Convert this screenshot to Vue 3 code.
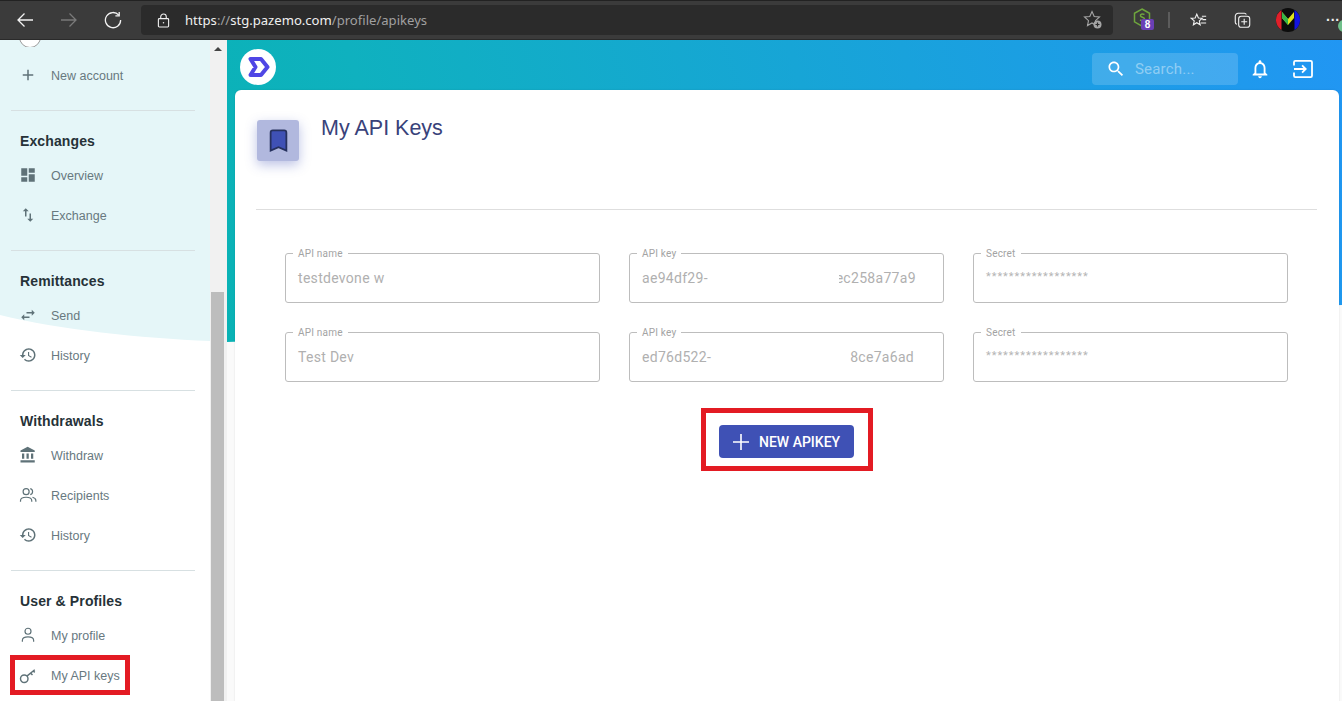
<script setup>
const sections = [
  { title: 'Exchanges', items: [['Overview', 'dash'], ['Exchange', 'vert']] },
  { title: 'Remittances', items: [['Send', 'horiz'], ['History', 'hist']] },
  { title: 'Withdrawals', items: [['Withdraw', 'bank'], ['Recipients', 'people'], ['History', 'hist']] },
]
const paths = {
  plus: 'M19 13h-6v6h-2v-6H5v-2h6V5h2v6h6v2z',
  dash: 'M3 13h8V3H3v10zm0 8h8v-6H3v6zm10 0h8V11h-8v10zm0-18v6h8V3h-8z',
  vert: 'M16 17.01V10h-2v7.01h-3L15 21l4-3.99h-3zM9 3L5 6.99h3V14h2V6.99h3L9 3z',
  horiz: 'M6.99 11L3 15l3.99 4v-3H14v-2H6.99v-3zM21 9l-3.99-4v3H10v2h7.01v3L21 9z',
  hist: 'M13 3c-4.97 0-9 4.03-9 9H1l3.89 3.89.07.14L9 12H6c0-3.87 3.13-7 7-7s7 3.13 7 7-3.13 7-7 7c-1.93 0-3.68-.79-4.94-2.06l-1.42 1.42C8.27 19.99 10.51 21 13 21c4.97 0 9-4.03 9-9s-4.03-9-9-9zm-1 5v5l4.28 2.54.72-1.21-3.5-2.08V8H12z',
  bank: 'M4 10v7h3v-7H4zm6 0v7h3v-7h-3zM2 22h19v-3H2v3zm14-12v7h3v-7h-3zm-4.5-9L2 6v2h19V6l-9.5-5z',
}
const rows = [
  [
    { label: 'API name', a: 'testdevone w' },
    { label: 'API key', a: 'ae94df29-', b: 'ec258a77a9', gap: 131, clip: 77 },
    { label: 'Secret', stars: true },
  ],
  [
    { label: 'API name', a: 'Test Dev' },
    { label: 'API key', a: 'ed76d522-', b: '8ce7a6ad', gap: 139 },
    { label: 'Secret', stars: true },
  ],
]
</script>

<template>
  <div class="app">
    <header class="chrome">
      <svg class="c-ic back" viewBox="0 0 18 18"><path d="M17 9H2M8.5 2.5L2 9l6.5 6.5" /></svg>
      <svg class="c-ic fwd" viewBox="0 0 18 18"><path d="M1 9h15M9.5 2.5L16 9l-6.5 6.5" /></svg>
      <svg class="c-ic reload" viewBox="0 0 18 18"><path d="M14.8 4.2A7.6 7.6 0 1 0 16.6 9" /><path d="M15.2 1v3.8h-3.8" /></svg>
      <div class="addr">
        <svg class="lock" viewBox="0 0 14 16"><rect x="1.5" y="6" width="11" height="9" rx="1" /><path d="M4 6V4a3 3 0 0 1 6 0v2" /><circle cx="7" cy="10.5" r=".8" class="dot" /></svg>
        <span class="url"><b>https</b><i>://</i><b>stg.pazemo.com</b><i>/profile/apikeys</i></span>
        <svg class="fav-add" viewBox="0 0 20 20"><path d="M9 1.5l2.2 5 5.3.5-4 3.6 1 5-4.5-2.6L4.500 15.600l1-5-4-3.600 5.300-.5z" /><circle cx="14.500" cy="14.500" r="4" class="fill" /><path d="M14.500 12.500v4M12.500 14.500h4" class="plus" /></svg>
      </div>
      <div class="node">
        <svg viewBox="0 0 18 20"><path d="M9 1l7.500 4.300v8.600L9 18.200 1.500 13.900V5.300z" /><path d="M11.500 6.500C9 5.500 7 6.300 7.500 8c.4 1.500 4 1 4 3 0 1.700-2.500 2-4.500 1" /></svg>
        <span class="badge">8</span>
      </div>
      <span class="sep"></span>
      <svg class="c-ic favs" viewBox="0 0 20 20"><path d="M8 2.500l1.900 4.500 4.600.4-3.500 3 1 4.600L8 12.600 4 15l1-4.600-3.500-3 4.600-.4zM14 5h5M14.500 9H19M13 13h6" /></svg>
      <svg class="c-ic coll" viewBox="0 0 20 20"><path d="M3.500 14.500A2.500 2.500 0 0 1 1.500 12V5a3.500 3.500 0 0 1 3.500-3.500h7A2.500 2.500 0 0 1 14.500 3" /><rect x="5.500" y="5" width="13" height="13" rx="3" /><path d="M12 8v7M8.500 11.500h7" /></svg>
      <div class="avatar">
        <svg viewBox="0 0 24 24"><circle cx="12" cy="12" r="12" fill="#0c0c0c" /><path d="M5.500 1.900A12 12 0 0 0 5.500 22.100z" fill="#e0202a" /><path d="M18.500 1.900A12 12 0 0 1 18.500 22.100z" fill="#1414e0" /><path d="M6 4l6 7 6-7v6l-6 7-6-7z" fill="#dfe21a" /><path d="M6 4l6 7v6l-6-7z" fill="#35b44a" /></svg>
      </div>
      <span class="more">···</span>
      <span class="green"></span>
    </header>

    <div class="page">
      <aside class="side">
        <nav class="nav">
          <div class="curve"></div>
          <div class="nav-in">
            <div class="avatar-clip"><span></span></div>
            <div class="row">
              <svg class="ic" viewBox="0 0 24 24"><path :d="paths.plus" /></svg>
              <span>New account</span>
            </div>
            <section v-for="s in sections" :key="s.title" class="sec">
              <h3>{{ s.title }}</h3>
              <div v-for="it in s.items" :key="it[0]" class="row">
                <svg v-if="it[1] === 'people'" class="ic line" viewBox="0 0 24 24"><circle cx="9.500" cy="7.500" r="4" /><path d="M2 21v-1.500c0-3 3.500-4.500 7.500-4.500s7.500 1.500 7.500 4.500V21M15 3.600a4 4 0 0 1 0 7.800M18 15c2.500.7 4.500 2 4.500 4.500V21" /></svg>
                <svg v-else class="ic" viewBox="0 0 24 24"><path :d="paths[it[1]]" /></svg>
                <span>{{ it[0] }}</span>
              </div>
            </section>
            <section class="sec">
              <h3>User &amp; Profiles</h3>
              <div class="row">
                <svg class="ic line" viewBox="0 0 24 24"><circle cx="12" cy="7" r="4" /><path d="M4.500 21v-2c0-3 3.500-4.500 7.500-4.500s7.500 1.500 7.500 4.500v2" /></svg>
                <span>My profile</span>
              </div>
              <div class="row">
                <span class="mark"></span>
                <svg class="ic line key" viewBox="0 0 24 24"><circle cx="7" cy="17" r="5" /><path d="M10.500 13.500L21 5M15.500 9.500l2.500 2.500M19 6.500l2 2" /></svg>
                <span>My API keys</span>
              </div>
            </section>
          </div>
        </nav>
        <div class="scroll">
          <span class="up"></span>
          <span class="thumb"></span>
        </div>
      </aside>

      <main class="main">
        <div class="hero"></div>
        <div class="top">
          <span class="logo">
            <svg viewBox="0 0 36 36"><path d="M10.500 10h10.500l6.500 8-6.500 8H10.500l5-8z" /></svg>
          </span>
          <div class="search">
            <svg viewBox="0 0 24 24"><path d="M15.500 14h-.79l-.28-.27C15.410 12.590 16 11.110 16 9.500 16 5.910 13.090 3 9.500 3S3 5.910 3 9.500 5.910 16 9.500 16c1.610 0 3.090-.59 4.230-1.570l.27.28v.79l5 4.990L20.490 19l-4.990-5zm-6 0C7.010 14 5 11.990 5 9.500S7.010 5 9.500 5 14 7.010 14 9.500 11.990 14 9.500 14z" /></svg>
            <span>Search...</span>
          </div>
          <svg class="bell" viewBox="0 0 24 24"><path d="M12 22c1.100 0 2-.9 2-2h-4c0 1.100.9 2 2 2zm6-6v-5c0-3.070-1.630-5.640-4.500-6.320V4c0-.83-.67-1.500-1.500-1.500s-1.500.67-1.500 1.500v.68C7.640 5.360 6 7.920 6 11v5l-2 2v1h16v-1l-2-2zm-2 1H8v-6c0-2.480 1.510-4.500 4-4.500s4 2.020 4 4.500v6z" /></svg>
          <svg class="exit" viewBox="0 0 22 20"><path d="M1 6V2.500A1.500 1.500 0 0 1 2.500 1h17A1.500 1.500 0 0 1 21 2.500v15a1.500 1.500 0 0 1-1.500 1.500h-17A1.500 1.500 0 0 1 1 17.500V14" /><path d="M1 10h12M10 6l4 4-4 4" /></svg>
        </div>

        <div class="card">
          <div class="head">
            <span class="tile">
              <svg viewBox="0 0 24 24"><path d="M17 3H7c-1.100 0-2 .9-2 2v16l7-3 7 3V5c0-1.100-.9-2-2-2z" /></svg>
            </span>
            <h1>My API Keys</h1>
          </div>
          <hr />
          <div class="grid">
            <template v-for="(r, i) in rows" :key="i">
              <div v-for="f in r" :key="f.label" class="field">
                <label>{{ f.label }}</label>
                <span v-if="f.stars" class="stars">******************</span>
                <span v-else class="val">
                  <span>{{ f.a }}</span>
                  <span v-if="f.b" class="clip" :style="{ width: f.clip ? f.clip + 'px' : 'auto', marginLeft: f.gap + 'px' }"><span>{{ f.b }}</span></span>
                </span>
              </div>
            </template>
          </div>
          <div class="actions">
            <div class="box">
              <button type="button">
                <svg viewBox="0 0 16 16"><path d="M8 0v16M0 8h16" /></svg>
                <span>NEW APIKEY</span>
              </button>
            </div>
          </div>
        </div>
      </main>
    </div>
  </div>
</template>

<style scoped>
.app { width: 1342px; height: 701px; overflow: hidden; display: flex; flex-direction: column; background: #fff; font-family: "Liberation Sans", Arial, sans-serif; }

.chrome { height: 40px; flex: none; display: flex; align-items: center; position: relative; background: #3b3b3b; border-top: 1px solid #222; border-bottom: 1px solid #2a2a2a; box-sizing: border-box; }
.c-ic { fill: none; stroke: #f2f2f2; stroke-width: 1.300; flex: none; }
.back { width: 18px; height: 18px; margin-left: 16px; }
.fwd { width: 18px; height: 18px; margin-left: 26px; stroke: #7a7a7a; }
.reload { width: 18px; height: 18px; margin-left: 26px; }
.addr { width: 972px; height: 30px; margin-left: 19px; background: #2b2b2b; border-radius: 4px; display: flex; align-items: center; flex: none; }
.lock { width: 13px; height: 15px; margin-left: 16px; fill: none; stroke: #eee; stroke-width: 1.200; }
.lock .dot { fill: #eee; stroke: none; }
.url { margin-left: 15px; font: 13.100px "Noto Sans", sans-serif; white-space: nowrap; }
.url b { font-weight: 400; color: #f0f0f0; }
.url i { font-style: normal; color: #a0a0a0; }
.fav-add { width: 20px; height: 20px; margin-left: auto; margin-right: 10px; fill: none; stroke: #a5a5a5; stroke-width: 1.100; }
.fav-add .fill { fill: #a5a5a5; stroke: none; }
.fav-add .plus { stroke: #2b2b2b; stroke-width: 1.200; }
.node { width: 18px; height: 20px; margin-left: 20px; margin-top: -4px; position: relative; flex: none; }
.node svg { width: 18px; height: 20px; fill: none; stroke: #6ea53d; stroke-width: 1.500; display: block; }
.badge { position: absolute; left: 8px; top: 11px; width: 13px; height: 11px; border-radius: 2px; background: #6a3fb5; color: #fff; font: 700 10px/11px "Liberation Sans", sans-serif; text-align: center; }
.sep { width: 2px; height: 16px; background: #5c5c5c; margin-left: 17px; flex: none; }
.favs { width: 17px; height: 17px; margin-left: 20px; }
.coll { width: 17px; height: 17px; margin-left: 27px; }
.avatar { width: 24px; height: 24px; margin-left: 25px; flex: none; }
.avatar svg { width: 24px; height: 24px; display: block; }
.more { margin-left: 26px; color: #eee; font: 700 14px/1 "Liberation Sans", sans-serif; letter-spacing: 0; }
.green { position: absolute; left: 1338px; top: 19px; width: 12px; height: 12px; border-radius: 50%; background: #6fbf8a; }

.page { flex: 1; display: flex; min-height: 0; position: relative; background: #fafafa; }

.side { width: 227px; flex: none; display: flex; background: #fff; }
.nav { width: 210px; flex: none; position: relative; overflow: hidden; background: #fff; }
.curve { position: absolute; inset: 0; background: #e5f6f8; clip-path: path('M0 0H210V301C140 298 60 290 0 275Z'); }
.nav-in { position: relative; }
.avatar-clip { height: 7px; overflow: hidden; margin-bottom: 8px; position: relative; }
.avatar-clip span { position: absolute; left: 19px; top: -14px; width: 20px; height: 20px; border-radius: 50%; background: #fff; border: 1px solid #9a9a9a; }
.row { height: 40px; display: flex; align-items: center; padding-left: 19px; position: relative; color: #68797f; font-size: 12.500px; }
.row > span:last-child { padding-top: 2px; }
.ic { width: 18px; height: 18px; margin-right: 14px; flex: none; fill: #5f7278; }
.ic.line { fill: none; stroke: #5f7278; stroke-width: 1.600; }
.ic.key { stroke-width: 1.900; }
.sec { margin-top: 15px; position: relative; }
.sec::before { content: ""; position: absolute; left: 11px; width: 184px; top: 0; height: 1px; background: #d7e0e2; }
.sec h3 { margin: 0; height: 45px; padding: 17px 0 0 20px; box-sizing: border-box; font-size: 14px; line-height: 28px; font-weight: 700; color: #263238; letter-spacing: .12px; }
.mark { position: absolute; left: 10px; top: 0; width: 120px; height: 40px; box-sizing: border-box; border: 5px solid #e31b23; }

.scroll { width: 17px; flex: none; background: #f1f1f1; position: relative; }
.up { position: absolute; left: 4px; top: 7px; border: 4px solid transparent; border-top: 0; border-bottom: 4px solid #444; }
.thumb { position: absolute; left: 1px; width: 13px; top: 252px; bottom: 0; background: #bdbdbd; }

.main { flex: 1; position: relative; min-width: 0; }
.hero { position: absolute; inset: 0; background: linear-gradient(72deg, #06b3af 0%, #0fb1bf 25%, #2196f3 100%); clip-path: polygon(0 0, 100% 0, 100% 265px, 0 302px); }
.top { position: relative; height: 50px; display: flex; align-items: center; padding: 0 0 0 13px; }
.logo { width: 36px; height: 36px; border-radius: 50%; background: #fff; margin-top: 4px; flex: none; }
.logo svg { width: 36px; height: 36px; display: block; fill: none; stroke: #4f46e5; stroke-width: 4; stroke-linejoin: round; }
.search { width: 146px; height: 32px; margin-left: auto; margin-top: 8px; background: rgba(255,255,255,.16); border-radius: 4px; display: flex; align-items: center; flex: none; }
.search svg { width: 20px; height: 20px; margin-left: 14px; fill: #fff; }
.search span { margin-left: 9px; font: 15px Roboto, sans-serif; color: rgba(255,255,255,.42); letter-spacing: .2px; }
.bell { width: 22px; height: 22px; margin-left: 11px; margin-top: 8px; fill: #fff; flex: none; }
.exit { width: 20px; height: 18px; margin-left: 22px; margin-right: 29px; margin-top: 8px; flex: none; fill: none; stroke: #fff; stroke-width: 2; }

.card { position: relative; margin: 0 3px 0 8px; background: #fff; border-radius: 6px 6px 0 0; height: 700px; box-shadow: 0 0 2px rgba(0,0,0,.12); padding: 30px 22px 0 21px; box-sizing: border-box; }
.head { height: 89px; display: flex; align-items: flex-start; }
.tile { width: 42px; height: 41px; margin-left: 1px; border-radius: 3px; background: #b1b8de; box-shadow: 0 4px 12px rgba(63,81,181,.35); display: flex; align-items: center; justify-content: center; flex: none; }
.tile svg { width: 27px; height: 27px; fill: #3f51b5; stroke: #26315e; stroke-width: 1.600; }
.head h1 { margin: -7px 0 0 22px; font-size: 21.500px; line-height: 30px; font-weight: 400; color: #39427a; }
hr { margin: 0; border: 0; height: 1px; background: #dedede; }
.grid { margin-top: 43px; padding: 0 29px; display: grid; grid-template-columns: repeat(3, 1fr); gap: 29px; }
.field { height: 50px; border: 1px solid #bdbdbd; border-radius: 3px; position: relative; box-sizing: border-box; padding-left: 12px; display: flex; align-items: center; color: #b0b0b0; font: 14px Roboto, sans-serif; letter-spacing: .3px; }
.field label { position: absolute; left: 7px; top: -6px; background: #fff; padding: 0 5px; font: 10px/11px Roboto, sans-serif; color: #a3a3a3; letter-spacing: .2px; }
.val { display: flex; white-space: nowrap; }
.clip { overflow: hidden; display: flex; justify-content: flex-end; }
.clip span { flex: none; }
.stars { font-size: 11px; letter-spacing: .97px; margin-top: -4px; color: #b5b5b5; }
.actions { margin-top: 26px; display: flex; justify-content: center; }
.box { width: 172px; height: 63px; box-sizing: border-box; border: 5px solid #e31b23; padding: 12px 0 0 13px; margin-left: 1px; }
button { width: 135px; height: 33px; background: #3f51b5; border: 0; border-radius: 4px; color: #fff; padding: 0 0 0 14px; display: flex; align-items: center; font: 500 14px Roboto, sans-serif; }
button svg { width: 16px; height: 16px; margin-right: 10px; fill: none; stroke: #fff; stroke-width: 1.600; flex: none; }
</style>

<style>
html, body { margin: 0; overflow: hidden; }
</style>
